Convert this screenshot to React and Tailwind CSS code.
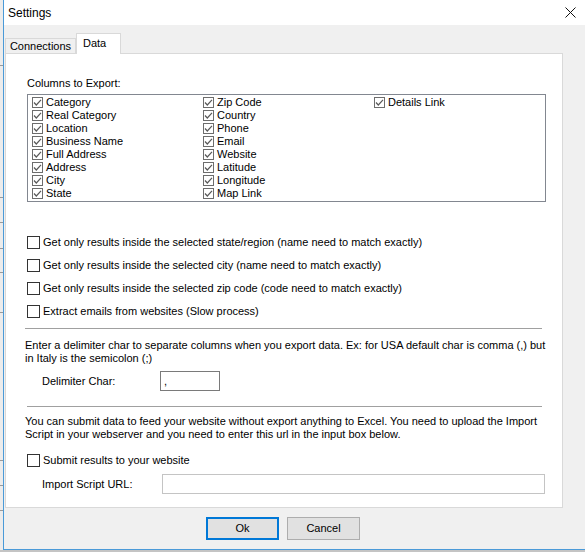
import React from "react";

function Check({ checked, muted, small }) {
  return (
    <span
      className={
        "inline-flex shrink-0 items-center justify-center border bg-white " +
        (small ? "w-[11px] h-[11px] " : "w-[13px] h-[13px] ") +
        (muted ? "border-[#6d6d6d]" : "border-[#333333]")
      }
    >
      {checked && (
        <svg width="9" height="9" viewBox="0 0 9 9">
          <polyline
            points="1,4.5 3.3,7 8,1.8"
            fill="none"
            stroke={muted ? "#5a5a5a" : "#333333"}
            strokeWidth="1.2"
          />
        </svg>
      )}
    </span>
  );
}

function ListItem({ label }) {
  return (
    <div className="flex items-center h-[13px] gap-[3px]">
      <Check checked muted small />
      <span className="leading-[13px] whitespace-nowrap">{label}</span>
    </div>
  );
}

function OptionRow({ label }) {
  return (
    <div className="flex items-center h-[23px] gap-[3px]">
      <Check />
      <span className="leading-[13px] whitespace-nowrap">{label}</span>
    </div>
  );
}

export default function App() {
  const col1 = ["Category", "Real Category", "Location", "Business Name", "Full Address", "Address", "City", "State"];
  const col2 = ["Zip Code", "Country", "Phone", "Email", "Website", "Latitude", "Longitude", "Map Link"];
  const col3 = ["Details Link"];
  return (
    <div className="w-[585px] h-[552px] overflow-hidden flex flex-col bg-[#c4c4c4] font-['Liberation_Sans',Arial,sans-serif] text-[11px] text-black">
      <div className="flex h-[550px]">
        {/* background window strip */}
        <div className="w-[3px] bg-[#ececec] flex flex-col">
          <div className="h-[65px]" />
          <div className="h-px bg-[#9a9a9a]" />
          <div className="h-[131px]" />
          <div className="h-px bg-[#9a9a9a]" />
          <div className="h-[24px]" />
          <div className="h-px bg-[#9a9a9a]" />
          <div className="h-[25px]" />
          <div className="h-px bg-[#9a9a9a]" />
          <div className="h-[23px]" />
          <div className="h-px bg-[#9a9a9a]" />
          <div className="h-[39px]" />
          <div className="h-px bg-[#9a9a9a]" />
          <div className="h-[147px]" />
          <div className="h-px bg-[#9a9a9a]" />
          <div className="h-[24px]" />
          <div className="h-px bg-[#9a9a9a]" />
          <div className="h-[24px]" />
          <div className="h-px bg-[#9a9a9a]" />
        </div>
        {/* dialog window */}
        <div className="flex-1 flex flex-col border-l border-b border-[#4a9ad8] bg-[#f0f0f0]">
          {/* title bar */}
          <div className="h-[25px] bg-white flex items-center justify-between pl-[4px] pr-[9px]">
            <span className="text-[12px] leading-[14px]">Settings</span>
            <svg width="11" height="11" viewBox="0 0 11 11">
              <line x1="0.5" y1="0.5" x2="10.5" y2="10.5" stroke="#111" strokeWidth="1" />
              <line x1="10.5" y1="0.5" x2="0.5" y2="10.5" stroke="#111" strokeWidth="1" />
            </svg>
          </div>
          {/* body */}
          <div className="flex-1 flex flex-col pt-[8px] pl-[1px]">
            {/* tabs */}
            <div className="flex items-end h-[20px]">
              <div className="w-[71px] h-[15px] border border-b-0 border-[#d9d9d9] bg-[#f0f0f0] flex items-center justify-center leading-[13px]">
                Connections
              </div>
              <div className="w-[45px] h-[21px] -mb-px relative z-10 border border-b-0 border-[#d9d9d9] bg-white flex items-start justify-start pl-[6px] pt-[3px] leading-[13px]">
                Data
              </div>
            </div>
            {/* panel */}
            <div className="w-[558px] h-[455px] border border-[#d9d9d9] bg-white flex flex-col">
              <div className="pl-[21px] mt-[23px] leading-[13px]">Columns to Export:</div>
              <div className="ml-[21px] mt-[4px] w-[519px] h-[108px] border border-[#828790] pt-[1px] pl-[4px] flex">
                <div className="w-[171px] flex flex-col">
                  {col1.map((l) => (
                    <ListItem key={l} label={l} />
                  ))}
                </div>
                <div className="w-[171px] flex flex-col">
                  {col2.map((l) => (
                    <ListItem key={l} label={l} />
                  ))}
                </div>
                <div className="w-[171px] flex flex-col">
                  {col3.map((l) => (
                    <ListItem key={l} label={l} />
                  ))}
                </div>
              </div>
              <div className="ml-[21px] mt-[29px] flex flex-col">
                <OptionRow label="Get only results inside the selected state/region (name need to match exactly)" />
                <OptionRow label="Get only results inside the selected city (name need to match exactly)" />
                <OptionRow label="Get only results inside the selected zip code (code need to match exactly)" />
                <OptionRow label="Extract emails from websites (Slow process)" />
              </div>
              <div className="ml-[19px] mt-[5px] w-[517px] h-px bg-[#a0a0a0]" />
              <div className="ml-[19px] mt-[10px] leading-[13px] whitespace-nowrap">
                Enter a delimiter char to separate columns when you export data. Ex: for USA default char is comma (,) but
                <br />
                in Italy is the semicolon (;)
              </div>
              <div className="ml-[36px] mt-[6px] flex items-center h-[20px]">
                <span className="w-[118px] leading-[13px]">Delimiter Char:</span>
                <div className="w-[60px] h-[20px] border border-[#7a7a7a] bg-white flex items-center pl-[3px] leading-[13px]">
                  ,
                </div>
              </div>
              <div className="ml-[21px] mt-[15px] w-[515px] h-px bg-[#a0a0a0]" />
              <div className="ml-[19px] mt-[8px] leading-[13px] whitespace-nowrap">
                You can submit data to feed your website without export anything to Excel. You need to upload the Import
                <br />
                Script in your webserver and you need to enter this url in the input box below.
              </div>
              <div className="ml-[21px] mt-[13px] flex items-center h-[13px] gap-[3px]">
                <Check />
                <span className="leading-[13px]">Submit results to your website</span>
              </div>
              <div className="ml-[36px] mt-[7px] flex items-center h-[20px]">
                <span className="w-[120px] leading-[13px]">Import Script URL:</span>
                <div className="w-[383px] h-[20px] border border-[#c4c4c4] bg-white" />
              </div>
            </div>
            {/* buttons */}
            <div className="flex mt-[9px] pl-[201px] gap-[8px]">
              <div className="w-[73px] h-[23px] border-2 border-[#0078d7] bg-[#e1e1e1] flex items-center justify-center leading-[13px]">
                Ok
              </div>
              <div className="w-[73px] h-[23px] border border-[#adadad] bg-[#e1e1e1] flex items-center justify-center leading-[13px]">
                Cancel
              </div>
            </div>
          </div>
        </div>
      </div>
    </div>
  );
}
